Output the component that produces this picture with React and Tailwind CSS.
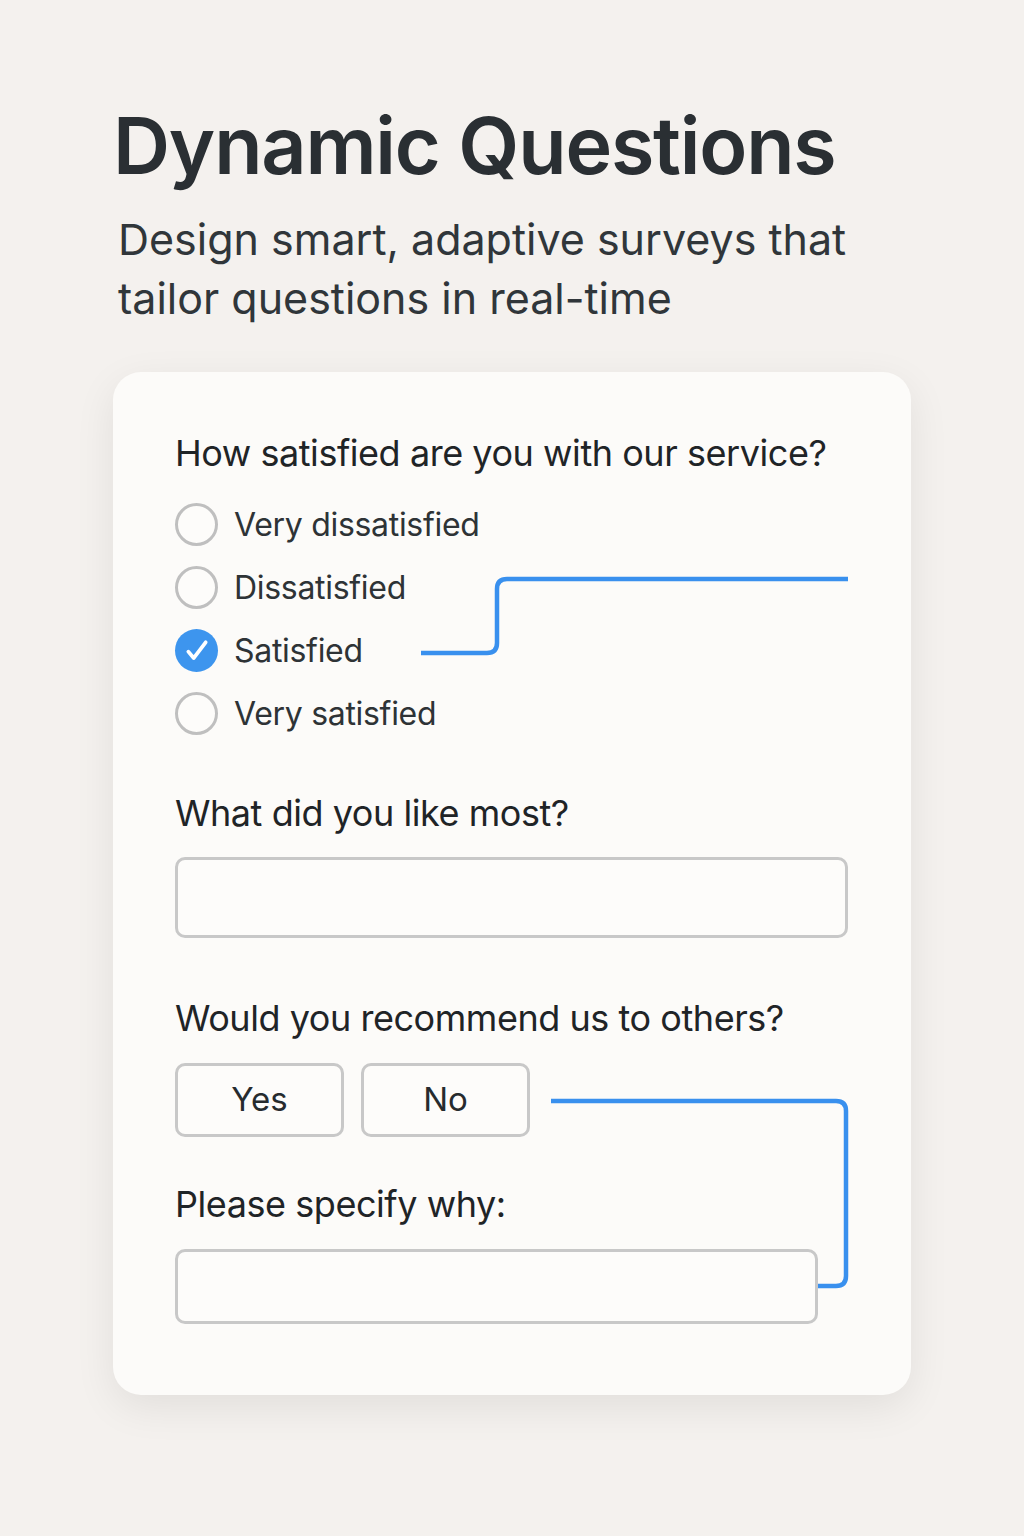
import React from "react";

const font = { fontFamily: "Inter, 'Noto Sans', sans-serif" };

const Radio = ({ label, checked }) => (
  <div className="flex items-center h-[63px] gap-4">
    {checked ? (
      <div className="w-[43px] h-[43px] rounded-full bg-[#3d95ee] flex items-center justify-center">
        <svg width="32" height="32" viewBox="0 0 24 24" fill="none">
          <path d="M5.5 12.5l4 4.8L18.5 5.5" stroke="white" strokeWidth="2.8" strokeLinecap="round" strokeLinejoin="round" />
        </svg>
      </div>
    ) : (
      <div className="w-[43px] h-[43px] rounded-full border-[3px] border-[#bfbfbf] bg-[#fdfcfa]" />
    )}
    <span className="text-[32px] leading-none text-[#2e3336] tracking-[-0.3px]">{label}</span>
  </div>
);

const Question = ({ children, className }) => (
  <h2 className={"text-[36px] leading-none text-[#1f2427] tracking-[-0.45px] " + (className || "")}>{children}</h2>
);

export default function App() {
  return (
    <div className="min-h-[1536px] w-[1024px] bg-[#f4f1ee] pt-[106px]" style={font}>
      <div className="ml-[113px] w-[798px]">
        <h1 className="text-[79px] leading-none font-semibold text-[#2a2f33] tracking-[-1.2px]">Dynamic Questions</h1>
        <p className="mt-[25px] ml-[5px] text-[43px] leading-[59px] text-[#30363a]">
          Design smart, adaptive surveys that
          <br />
          tailor questions in real-time
        </p>

        <div className="relative mt-[44px] rounded-[28px] bg-[#fcfbf9] shadow-[0_12px_40px_rgba(0,0,0,0.08)] pt-[63px] pb-[71px] px-[62px]">
          <Question>How satisfied are you with our service?</Question>
          <div className="mt-[22px] flex flex-col">
            <Radio label="Very dissatisfied" />
            <Radio label="Dissatisfied" />
            <Radio label="Satisfied" checked />
            <Radio label="Very satisfied" />
          </div>

          <Question className="mt-[50px]">What did you like most?</Question>
          <div className="mt-[26px] h-[81px] w-[673px] rounded-[10px] border-[3px] border-[#c8c8c8] bg-[#fdfcfa]" />

          <Question className="mt-[62px]">Would you recommend us to others?</Question>
          <div className="mt-[27px] flex gap-[17px]">
            <button className="h-[74px] w-[169px] rounded-[10px] border-[3px] border-[#c8c8c8] bg-[#fdfcfa] text-[33px] text-[#262b2e]">Yes</button>
            <button className="h-[74px] w-[169px] rounded-[10px] border-[3px] border-[#c8c8c8] bg-[#fdfcfa] text-[33px] text-[#262b2e]">No</button>
          </div>

          <Question className="mt-[49px]">Please specify why:</Question>
          <div className="mt-[27px] h-[75px] w-[643px] rounded-[10px] border-[3px] border-[#c8c8c8] bg-[#fdfcfa]" />

          <svg className="absolute left-0 top-0 pointer-events-none" width="798" height="1021" fill="none">
            <path d="M308 281 H374 Q384 281 384 271 V217 Q384 207 394 207 H735" stroke="#3990ee" strokeWidth="4.5" />
            <path d="M438 729 H723 Q733 729 733 739 V904 Q733 914 723 914 H705" stroke="#3990ee" strokeWidth="4.5" />
          </svg>
        </div>
      </div>
    </div>
  );
}
